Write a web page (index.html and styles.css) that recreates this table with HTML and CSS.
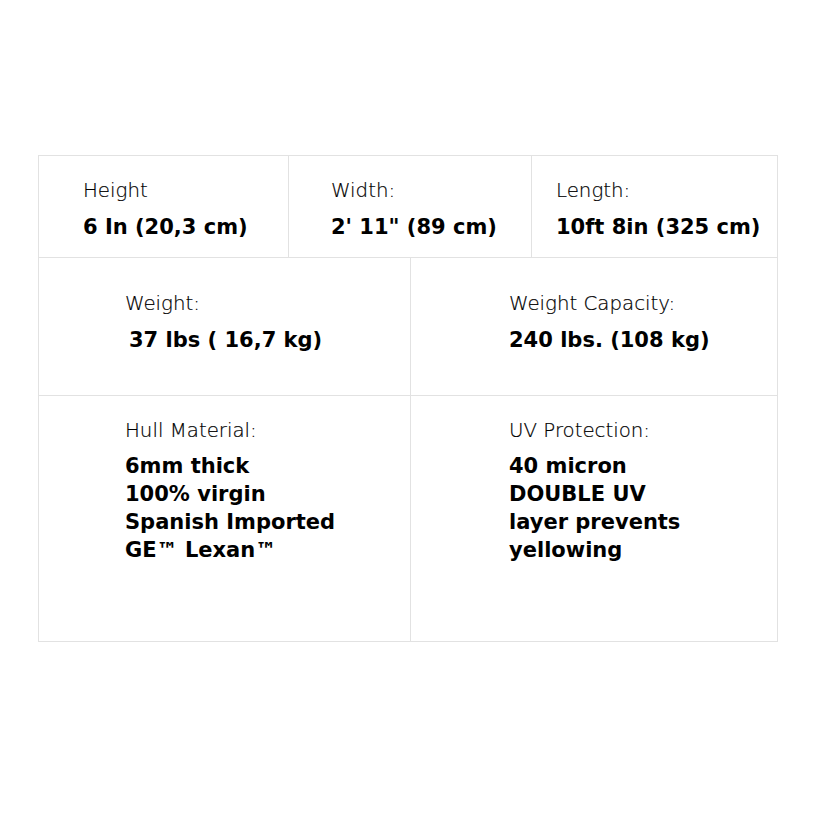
FILE: index.html
```html
<!DOCTYPE html>
<html>
<head>
<meta charset="utf-8">
<link rel="stylesheet" href="styles.css">
</head>
<body>
<div class="specs">
  <div class="row row-three">
    <div class="cell c1"><div class="label">Height</div><div class="value">6 In (20,3 cm)</div></div>
    <div class="cell c2"><div class="label">Width:</div><div class="value">2' 11" (89 cm)</div></div>
    <div class="cell c3"><div class="label">Length:</div><div class="value">10ft 8in (325 cm)</div></div>
  </div>
  <div class="row row-two mid">
    <div class="cell c4"><div class="label">Weight:</div><div class="value shift">37 lbs ( 16,7 kg)</div></div>
    <div class="cell c5"><div class="label">Weight Capacity:</div><div class="value">240 lbs. (108 kg)</div></div>
  </div>
  <div class="row row-two last">
    <div class="cell c4"><div class="label">Hull Material:</div><div class="value">6mm thick<br>100% virgin<br>Spanish Imported<br>GE™ Lexan™</div></div>
    <div class="cell c5"><div class="label">UV Protection:</div><div class="value">40 micron<br>DOUBLE UV<br>layer prevents<br>yellowing</div></div>
  </div>
</div>
</body>
</html>
```
FILE: styles.css
```css
html, body { margin: 0; padding: 0; background: #fff; }
body { font-family: "DejaVu Sans", "Liberation Sans", sans-serif; color: #000; }
.specs {
  margin: 155px 0 0 38px;
  width: 740px;
  border: 1px solid #e2e2e2;
  box-sizing: border-box;
}
.row { display: grid; border-bottom: 1px solid #e2e2e2; }
.row.last { border-bottom: none; }
.row-three { grid-template-columns: 250px 243px 1fr; height: 101px; }
.row-two { grid-template-columns: 372px 1fr; }
.mid { height: 137px; }
.last { height: 245px; }
.cell { border-right: 1px solid #e2e2e2; box-sizing: border-box; }
.cell:last-child { border-right: none; }
.row-three .cell { padding-top: 23px; }
.mid .cell { padding-top: 34px; }
.last .cell { padding-top: 23px; }
.c1 { padding-left: 44px; }
.c2 { padding-left: 42px; }
.c3 { padding-left: 24px; }
.c4 { padding-left: 86px; }
.c5 { padding-left: 98px; }
.label { font-size: 19.8px; font-weight: 200; color: #000; line-height: 24px; -webkit-text-stroke: 0.2px #000; }
.value { font-size: 21px; font-weight: 700; line-height: 28px; margin-top: 10px; }
.last .value { margin-top: 9px; }
.shift { padding-left: 4px; }
```
